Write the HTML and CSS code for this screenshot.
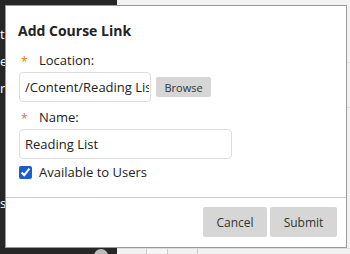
FILE: index.html
```html
<!DOCTYPE html>
<html lang="en">
<head>
    <meta charset="UTF-8">
    <meta name="viewport" content="width=device-width, initial-scale=1.0">
    <title>Add Course Link</title>
    <link rel="stylesheet" href="styles.css">
</head>
<body>
    <div class="page">
        <div class="sidebar">
            <div class="nav-item nav-first">tools</div>
            <div class="nav-item">enrollment</div>
            <div class="nav-item">resources</div>
            <div class="nav-item nav-last">settings</div>
            <div class="avatar"></div>
        </div>
        <div class="main">
            <div class="row row-top"></div>
            <div class="row"></div>
            <div class="row row-tall"></div>
            <div class="row-bottom">
                <div class="cell"></div>
                <div class="cell cell-small"></div>
                <div class="cell"></div>
            </div>
        </div>
    </div>

    <div class="dialog">
        <h2 class="dialog-title">Add Course Link</h2>
        <div class="dialog-body">
            <label class="field-label"><span class="required">*</span>Location:</label>
            <div class="field-row">
                <input type="text" class="text-input input-location" value="/Content/Reading List">
                <button class="btn-browse">Browse</button>
            </div>
            <label class="field-label"><span class="required">*</span>Name:</label>
            <div class="field-row field-row-last">
                <input type="text" class="text-input input-name" value="Reading List">
            </div>
            <label class="check-row">
                <input type="checkbox" checked>
                <span>Available to Users</span>
            </label>
        </div>
        <div class="dialog-footer">
            <button class="btn">Cancel</button>
            <button class="btn btn-wide">Submit</button>
        </div>
    </div>
</body>
</html>
```

FILE: styles.css
```css
body {
    margin: 0;
    font-family: "Open Sans", Arial, sans-serif;
    background-color: #f2f2f2;
    overflow: hidden;
}
.page {
    display: flex;
    height: 254px;
}
.sidebar {
    width: 117px;
    background-color: #262626;
    color: white;
    font-size: 13px;
    position: relative;
}
.nav-item {
    height: 27px;
    line-height: 27px;
}
.nav-first {
    margin-top: 21px;
}
.nav-last {
    margin-top: 88px;
}
.avatar {
    position: absolute;
    left: 94px;
    top: 249px;
    width: 14px;
    height: 14px;
    border-radius: 50%;
    background-color: #bbb;
}
.main {
    flex: 1;
    display: flex;
    flex-direction: column;
}
.row {
    height: 44px;
    border-bottom: 1px solid #ddd;
}
.row-top {
    height: 62px;
}
.row-tall {
    height: 140px;
}
.row-bottom {
    display: flex;
    flex: 1;
}
.cell {
    width: 29px;
    border-right: 1px solid #ccc;
}
.cell-small {
    width: 20px;
    background-color: #f7f7f7;
}
.dialog {
    position: absolute;
    left: 5px;
    top: 5px;
    width: 340px;
    height: 241px;
    background-color: white;
    border: 1px solid #9a9a9a;
    display: flex;
    flex-direction: column;
}
.dialog-title {
    margin: 0;
    padding: 15px 12px 0;
    font-size: 14px;
    font-weight: bold;
    color: #222;
}
.dialog-body {
    flex: 1;
    padding: 10px 13px 0;
}
.field-label {
    display: flex;
    align-items: center;
    font-size: 13px;
    color: #222;
    height: 20px;
}
.required {
    color: #f26b21;
    width: 20px;
    padding-left: 2px;
    padding-top: 3px;
    font-size: 12px;
    box-sizing: border-box;
}
.field-row {
    display: flex;
    align-items: center;
    margin: 2px 0 5px;
}
.field-row-last {
    margin-bottom: 4px;
}
.text-input {
    height: 30px;
    box-sizing: border-box;
    border: 1px solid #ddd;
    border-radius: 4px;
    padding: 0 1px 0 5px;
    font-family: "Open Sans", Arial, sans-serif;
    font-size: 13px;
    color: #222;
}
.input-location {
    width: 132px;
}
.input-name {
    width: 213px;
}
.btn-browse {
    margin-left: 5px;
    height: 20px;
    width: 55px;
    border: none;
    border-radius: 2px;
    background-color: #d6d6d6;
    font-family: "Open Sans", Arial, sans-serif;
    font-size: 11px;
    color: #333;
    padding: 0;
}
.check-row {
    display: flex;
    align-items: center;
    font-size: 13px;
    color: #222;
}
.check-row input {
    margin: 0 7px 0 0;
    width: 13px;
    height: 13px;
    accent-color: #1a5dcf;
}
.dialog-footer {
    display: flex;
    justify-content: flex-end;
    gap: 3px;
    padding: 9px 9px 10px;
    border-top: 1px solid #ccc;
}
.btn {
    height: 30px;
    width: 64px;
    border: none;
    border-radius: 2px;
    background-color: #d6d6d6;
    font-family: "Open Sans", Arial, sans-serif;
    font-size: 12px;
    color: #333;
    padding: 0;
}
.btn-wide {
    width: 67px;
}
```
